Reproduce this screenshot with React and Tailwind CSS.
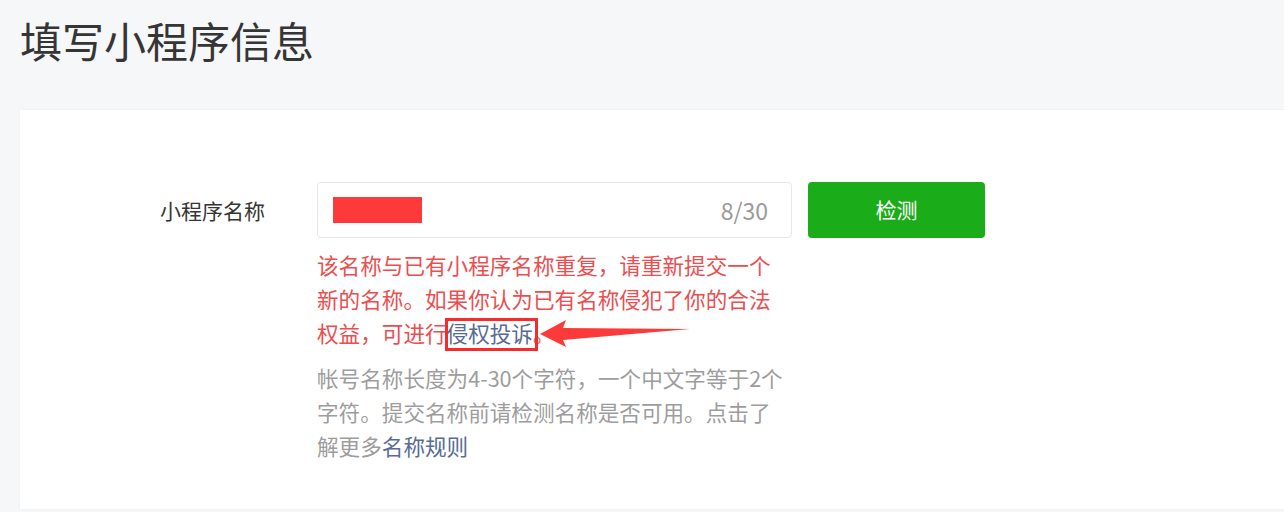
import React from 'react';

const FONT = "font-['Microsoft_YaHei','Noto_Sans_CJK_SC','Noto_Sans',sans-serif]";

/**
 * 红色标注箭头
 */
const Arrow = () => (
  <svg width="156" height="34" viewBox="0 0 156 34" className="absolute left-[calc(100%+4px)] top-0">
    <polygon points="3,18 29,4 26,12 153,13 26,24 29,31" fill="#fb3a3a" />
  </svg>
);

const App = () => {
  return (
    <div className={`min-h-[512px] bg-[#f6f7f9] ${FONT}`}>
      <h1 className="h-[110px] pl-[20px] pt-[14px] text-[42px] leading-[52px] text-[#353535]">
        填写小程序信息
      </h1>

      <div className="ml-[20px] h-[399px] bg-white pl-[140px] pt-[72px] shadow-[0_0_2px_rgba(0,0,0,0.06)]">
        <div className="flex">
          <label className="w-[157px] pt-[13px] text-[21px] leading-[30px] text-[#353535]">
            小程序名称
          </label>

          <div>
            <div className="flex items-center">
              <div className="flex h-[56px] w-[475px] items-center justify-between rounded-[4px] border border-[#e4e8eb] pl-[15px] pr-[23px]">
                <div className="h-[26px] w-[89px] bg-[#fd3939]" />
                <span className="text-[23px] text-[#9a9a9a]">8/30</span>
              </div>
              <button
                type="button"
                className="ml-[16px] h-[56px] w-[177px] rounded-[4px] bg-[#1aad19] text-[21px] text-white"
              >
                检测
              </button>
            </div>

            <p className="mt-[10px] w-[500px] text-[21.6px] leading-[34px] text-[#ec4d4f]">
              该名称与已有小程序名称重复，请重新提交一个
              <br />
              新的名称。如果你认为已有名称侵犯了你的合法
              <br />
              权益，可进行
              <span className="relative inline-block text-[#576b95]">
                侵权投诉
                <span className="absolute -left-[2px] -right-[5px] top-[2px] -bottom-[1px] border-[3px] border-[#f52c2c]" />
                <Arrow />
              </span>
              。
            </p>

            <p className="mt-[11px] w-[500px] text-[21.6px] leading-[34px] text-[#9d9d9d]">
              帐号名称长度为4-30个字符，一个中文字等于2个
              <br />
              字符。提交名称前请检测名称是否可用。点击了
              <br />
              解更多<a className="text-[#576b95]">名称规则</a>
            </p>
          </div>
        </div>
      </div>
    </div>
  );
};

export default App;
